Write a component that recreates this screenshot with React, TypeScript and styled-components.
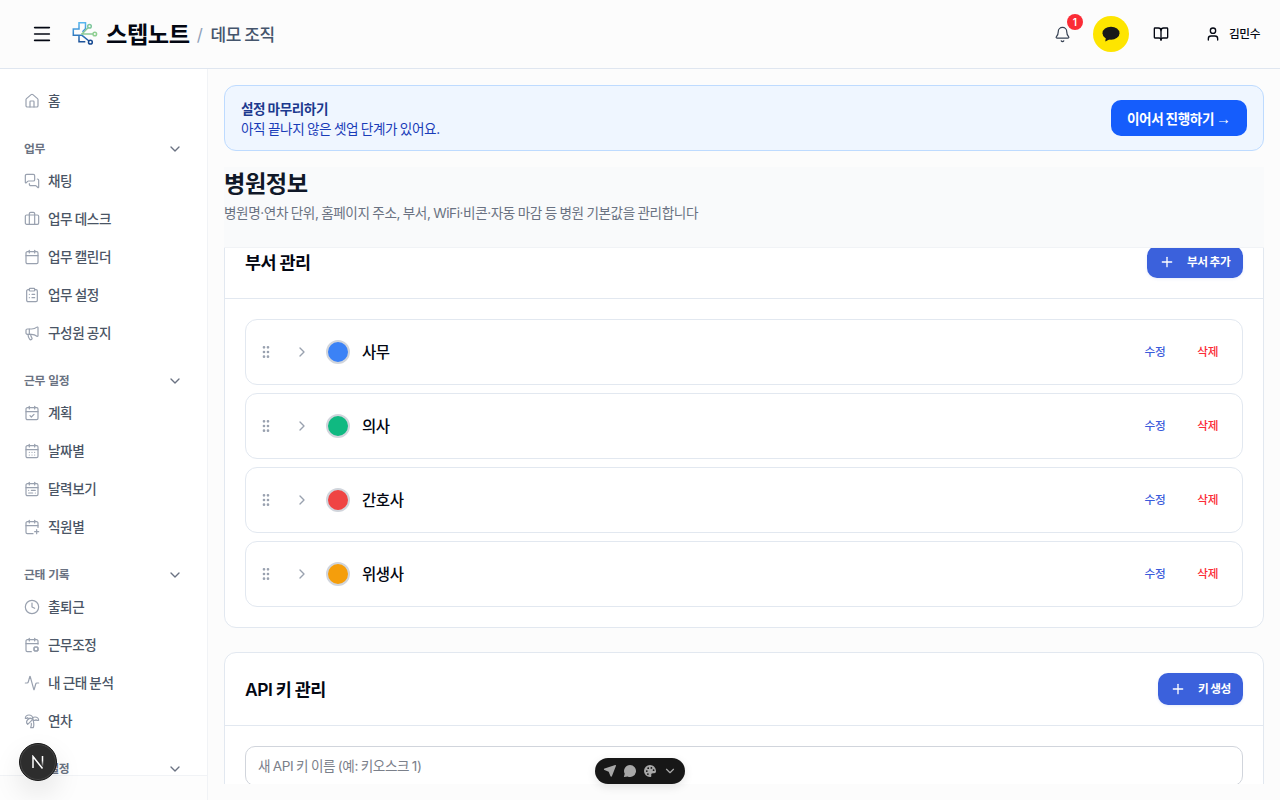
import React from "react";
import styled, { createGlobalStyle } from "styled-components";
import {
  Activity, Bell, BookOpen, Briefcase, Calendar, CalendarCheck, CalendarCog, CalendarDays,
  CalendarPlus, CalendarRange, ChevronDown, ChevronRight, ClipboardList, Clock, GripVertical,
  House, Megaphone, Menu, MessagesSquare, Plus, TreePalm, User,
} from "lucide-react";
import type { LucideIcon } from "lucide-react";

const Global = createGlobalStyle`
  *, *::before, *::after { box-sizing: border-box; }
  body {
    margin: 0;
    background: #fcfcfc;
    color: #030712;
    font-family: Inter, "Noto Sans CJK KR", sans-serif;
    font-size: 13.6px;
    line-height: 20px;
    letter-spacing: -0.03em;
    word-spacing: -0.05em;
    overflow: hidden;
  }
  button, input { font: inherit; letter-spacing: inherit; word-spacing: inherit; }
  svg { display: block; flex-shrink: 0; }
  h1, h2, p { margin: 0; }
`;

const Page = styled.div`
  display: flex;
  flex-direction: column;
  height: 100vh;
`;

const Header = styled.header`
  display: flex;
  align-items: center;
  justify-content: space-between;
  height: 69px;
  flex-shrink: 0;
  padding: 0 20px 0 31px;
  border-bottom: 1px solid #dfe6f0;
`;

const Brand = styled.div`
  display: flex;
  align-items: center;
`;

const LogoMark = styled.svg`
  margin-left: 19px;
`;

const BrandName = styled.span`
  margin-left: 8px;
  padding-top: 2px;
  font-size: 23.2px;
  line-height: 32px;
  font-weight: 700;
`;

const Slash = styled.span`
  margin-left: 7px;
  padding-top: 1px;
  font-size: 17px;
  color: #90a1b9;
`;

const OrgName = styled.span`
  margin-left: 8px;
  padding-top: 1px;
  font-size: 17px;
  line-height: 28px;
  font-weight: 500;
  color: #45556c;
`;

const Actions = styled.div`
  display: flex;
  align-items: center;
`;

const IconButton = styled.button`
  position: relative;
  display: flex;
  align-items: center;
  justify-content: center;
  width: 36px;
  height: 36px;
  padding: 0;
  border: 0;
  background: none;
  color: #030712;
`;

const KakaoButton = styled(IconButton)`
  margin: 0 14px 0 12px;
  border-radius: 50%;
  background: #fee500;
`;

const Badge = styled.span`
  position: absolute;
  top: -2px;
  right: -2px;
  width: 16px;
  height: 16px;
  border-radius: 8px;
  background: #fb2c36;
  color: #fff;
  font-size: 10px;
  line-height: 16px;
  font-weight: 600;
  letter-spacing: 0;
  text-align: center;
`;

const UserButton = styled.button`
  display: flex;
  align-items: center;
  gap: 8px;
  margin-left: 26px;
  padding: 0;
  border: 0;
  background: none;
  color: #030712;
  font-size: 11.7px;
  line-height: 16px;
  font-weight: 500;
`;

const Body = styled.div`
  display: flex;
  flex: 1;
  min-height: 0;
`;

const Sidebar = styled.aside`
  display: flex;
  flex-direction: column;
  width: 208px;
  flex-shrink: 0;
  border-right: 1px solid #f1f3f6;
  background: #fff;
`;

const Nav = styled.nav`
  flex: 1;
  min-height: 0;
  overflow: hidden;
  padding: 14px 16px 0 12px;
`;

const SidebarFoot = styled.div`
  height: 25px;
  flex-shrink: 0;
  border-top: 1px solid #f1f3f6;
  background: #fdfdfd;
`;

const NavItem = styled.a`
  display: flex;
  align-items: center;
  gap: 8px;
  height: 36px;
  margin-bottom: 2px;
  padding: 0 12px;
  color: #4a5565;
  font-weight: 500;

  svg { color: #99a1af; }
`;

const NavGroup = styled.div`
  display: flex;
  align-items: center;
  justify-content: space-between;
  height: 29px;
  margin-top: 15px;
  padding: 0 8px 0 12px;
  color: #6a7282;
  font-size: 11.8px;
  line-height: 16px;
  font-weight: 600;
  letter-spacing: -0.02em;
  word-spacing: 0.02em;
`;

const Main = styled.main`
  display: flex;
  flex-direction: column;
  flex: 1;
  min-width: 0;
  padding: 16px;
`;

const SetupBanner = styled.section`
  display: flex;
  align-items: center;
  justify-content: space-between;
  height: 66px;
  flex-shrink: 0;
  padding: 0 16px;
  border: 1px solid #bedbff;
  border-radius: 12px;
  background: #eff6ff;
  color: #193cb8;
`;

const BannerText = styled.div`
  padding-top: 2px;
`;

const BannerTitle = styled.p`
  font-weight: 600;
  color: #1c398e;
`;

const ContinueButton = styled.button`
  display: flex;
  align-items: center;
  justify-content: center;
  gap: 2px;
  width: 136px;
  height: 36px;
  padding: 1px 0 0;
  border: 0;
  border-radius: 10px;
  background: #155dfc;
  color: #fff;
  font-weight: 600;
`;

const Arrow = styled.span`
  font-family: "Liberation Sans", sans-serif;
  font-size: 15px;
  font-weight: 400;
  letter-spacing: 0;
`;

const PageHead = styled.div`
  height: 81px;
  flex-shrink: 0;
  margin-top: 16px;
  padding-top: 1px;
  border-bottom: 1px solid #f1f3f6;
  background: #f9fafb;
`;

const PageTitle = styled.h1`
  font-size: 23.2px;
  line-height: 32px;
  font-weight: 700;
  color: #101828;
`;

const PageSub = styled.p`
  margin-top: 3px;
  color: #6a7282;
`;

const Scroller = styled.div`
  flex: 1;
  min-height: 0;
  overflow: hidden;
`;

const Card = styled.section<{ $scrolled?: boolean }>`
  margin-top: ${(p) => (p.$scrolled ? "-23px" : "24px")};
  border: 1px solid #e2e8f0;
  border-radius: 12px;
  background: #fff;
`;

const CardHead = styled.div`
  display: flex;
  align-items: center;
  justify-content: space-between;
  height: 73px;
  padding: 0 20px;
  border-bottom: 1px solid #e2e8f0;
`;

const CardTitle = styled.h2`
  padding-top: 1px;
  font-size: 17.4px;
  line-height: 28px;
  font-weight: 600;
`;

const CardBody = styled.div`
  display: flex;
  flex-direction: column;
  gap: 8px;
  padding: 20px;
`;

const AddButton = styled.button<{ $width: number }>`
  display: flex;
  align-items: center;
  gap: 12px;
  width: ${(p) => p.$width}px;
  height: 32px;
  padding: 0 12px;
  border: 0;
  border-radius: 10px;
  background: #3b61dc;
  color: #fff;
  font-size: 11.7px;
  line-height: 16px;
  font-weight: 600;
  white-space: nowrap;
  box-shadow: 0 1px 3px rgba(59, 97, 220, 0.12);
`;

const DeptRow = styled.div`
  display: flex;
  align-items: center;
  height: 66px;
  padding: 0 24px 0 12px;
  border: 1px solid #e2e8f0;
  border-radius: 12px;
  color: #99a1af;
`;

const Swatch = styled.span<{ $color: string }>`
  width: 24px;
  height: 24px;
  margin: 0 12px 0 16px;
  border: 2px solid #d1d5dc;
  border-radius: 50%;
  background: ${(p) => p.$color};
`;

const DeptName = styled.span`
  flex: 1;
  padding-top: 1px;
  color: #030712;
  font-size: 15.5px;
  line-height: 24px;
  font-weight: 500;
`;

const TextAction = styled.button<{ $danger?: boolean }>`
  margin-left: ${(p) => (p.$danger ? "32px" : "0")};
  padding: 0;
  border: 0;
  background: none;
  color: ${(p) => (p.$danger ? "#fb2c36" : "#3b5bdb")};
  font-size: 11.7px;
  line-height: 16px;
  font-weight: 500;
`;

const GripIcon = styled(GripVertical)`
  margin-right: 20px;
`;

const KeyInput = styled.input`
  height: 40px;
  padding: 0 12px;
  border: 1px solid #d1d5dc;
  border-radius: 10px;
  background: #fff;
  outline: none;

  &::placeholder { color: #7b808a; opacity: 1; }
`;

const DevBadge = styled.div`
  position: fixed;
  left: 19px;
  bottom: 19px;
  display: flex;
  align-items: center;
  justify-content: center;
  width: 38px;
  height: 38px;
  border: 1px solid #171717;
  border-radius: 50%;
  background: #2d2d2d;
  box-shadow: inset 0 0 0 1px #454545, 0 12px 28px rgba(0, 0, 0, 0.1);
`;

const FloatingBar = styled.div`
  position: fixed;
  left: 595px;
  bottom: 16px;
  display: flex;
  align-items: center;
  justify-content: space-between;
  width: 90px;
  height: 26px;
  padding: 0 8px;
  border-radius: 13px;
  background: #171717;
  color: #a8a8a8;
  box-shadow: 0 3px 10px rgba(0, 0, 0, 0.1);
`;

type Entry = { label: string; icon: LucideIcon };

const groups: { title: string; items: Entry[] }[] = [
  {
    title: "업무",
    items: [
      { label: "채팅", icon: MessagesSquare },
      { label: "업무 데스크", icon: Briefcase },
      { label: "업무 캘린더", icon: Calendar },
      { label: "업무 설정", icon: ClipboardList },
      { label: "구성원 공지", icon: Megaphone },
    ],
  },
  {
    title: "근무 일정",
    items: [
      { label: "계획", icon: CalendarCheck },
      { label: "날짜별", icon: CalendarDays },
      { label: "달력보기", icon: CalendarRange },
      { label: "직원별", icon: CalendarPlus },
    ],
  },
  {
    title: "근태 기록",
    items: [
      { label: "출퇴근", icon: Clock },
      { label: "근무조정", icon: CalendarCog },
      { label: "내 근태 분석", icon: Activity },
      { label: "연차", icon: TreePalm },
    ],
  },
  { title: "병원 설정", items: [] },
];

const departments = [
  { name: "사무", color: "#3b82f6" },
  { name: "의사", color: "#10b981" },
  { name: "간호사", color: "#ef4444" },
  { name: "위생사", color: "#f59e0b" },
];

function Logo() {
  return (
    <LogoMark width="26" height="26" viewBox="0 0 26 26" fill="none" strokeWidth="1.5">
      <defs>
        <linearGradient id="cross" x1="0" y1="1" x2="0" y2="22" gradientUnits="userSpaceOnUse">
          <stop offset="0" stopColor="#58b9f0" />
          <stop offset="0.5" stopColor="#3b8bd0" />
          <stop offset="1" stopColor="#174a91" />
        </linearGradient>
      </defs>
      <path d="M13.5 8V1.7H7V8H1.3v6.3H7v6.4h6.3M7 14.3h3L17 20M13.5 7.8l-3 3" stroke="url(#cross)" />
      <path d="M9.500 13.500 16 6.800M9 13h12" stroke="#8ac996" />
      <circle cx="17.5" cy="5.2" r="1.8" stroke="#7fc79d" />
      <circle cx="22.8" cy="13" r="1.8" stroke="#8fcf91" />
      <circle cx="18.4" cy="21.2" r="1.9" stroke="#174a91" />
    </LogoMark>
  );
}

function NavLink({ label, icon: Icon }: Entry) {
  return (
    <NavItem>
      <Icon size={16} strokeWidth={1.8} />
      {label}
    </NavItem>
  );
}

export default function App() {
  return (
    <Page>
      <Global />
      <Header>
        <Brand>
          <Menu size={22} strokeWidth={1.8} />
          <Logo />
          <BrandName>스텝노트</BrandName>
          <Slash>/</Slash>
          <OrgName>데모 조직</OrgName>
        </Brand>
        <Actions>
          <IconButton>
            <Bell size={17} strokeWidth={1.7} color="#364153" />
            <Badge>1</Badge>
          </IconButton>
          <KakaoButton>
            <svg width="18" height="18" viewBox="0 0 18 18" fill="#191919">
              <ellipse cx="9" cy="8.2" rx="8.5" ry="6.5" />
              <path d="M4 12 3.300 16c0 .4.300.500.600.300L8 14Z" />
            </svg>
          </KakaoButton>
          <IconButton>
            <BookOpen size={16} strokeWidth={2} />
          </IconButton>
          <UserButton>
            <User size={16} strokeWidth={2} />
            김민수
          </UserButton>
        </Actions>
      </Header>
      <Body>
        <Sidebar>
          <Nav>
            <NavLink label="홈" icon={House} />
            {groups.map((g) => (
              <React.Fragment key={g.title}>
                <NavGroup>
                  {g.title}
                  <ChevronDown size={16} />
                </NavGroup>
                {g.items.map((i) => <NavLink key={i.label} {...i} />)}
              </React.Fragment>
            ))}
          </Nav>
          <SidebarFoot />
        </Sidebar>
        <Main>
          <SetupBanner>
            <BannerText>
              <BannerTitle>설정 마무리하기</BannerTitle>
              <p>아직 끝나지 않은 셋업 단계가 있어요.</p>
            </BannerText>
            <ContinueButton>이어서 진행하기 <Arrow>→</Arrow></ContinueButton>
          </SetupBanner>
          <PageHead>
            <PageTitle>병원정보</PageTitle>
            <PageSub>병원명·연차 단위, 홈페이지 주소, 부서, WiFi·비콘·자동 마감 등 병원 기본값을 관리합니다</PageSub>
          </PageHead>
          <Scroller>
            <Card $scrolled>
              <CardHead>
                <CardTitle>부서 관리</CardTitle>
                <AddButton $width={96}><Plus size={16} />부서 추가</AddButton>
              </CardHead>
              <CardBody>
                {departments.map((d) => (
                  <DeptRow key={d.name}>
                    <GripIcon size={16} />
                    <ChevronRight size={16} />
                    <Swatch $color={d.color} />
                    <DeptName>{d.name}</DeptName>
                    <TextAction>수정</TextAction>
                    <TextAction $danger>삭제</TextAction>
                  </DeptRow>
                ))}
              </CardBody>
            </Card>
            <Card>
              <CardHead>
                <CardTitle>API 키 관리</CardTitle>
                <AddButton $width={85}><Plus size={16} />키 생성</AddButton>
              </CardHead>
              <CardBody>
                <KeyInput placeholder="새 API 키 이름 (예: 키오스크 1)" />
              </CardBody>
            </Card>
          </Scroller>
        </Main>
      </Body>
      <DevBadge>
        <svg width="14" height="14" viewBox="0 0 14 14" fill="none" strokeWidth="1.5">
          <defs>
            <linearGradient id="fade" x1="0" y1="1" x2="0" y2="12" gradientUnits="userSpaceOnUse">
              <stop offset="0.4" stopColor="#fff" />
              <stop offset="1" stopColor="#fff" stopOpacity="0" />
            </linearGradient>
          </defs>
          <path d="M2 13V1.500L11.500 13.500" stroke="#fff" />
          <path d="M11.500 1 11.510 12" stroke="url(#fade)" />
        </svg>
      </DevBadge>
      <FloatingBar>
        <svg width="14" height="14" viewBox="0 0 14 14" fill="currentColor">
          <path d="M12.200 1.100 1.600 4.500c-.9.300-.9 1.300-.1 1.600l4.200 1.700 1.700 4.300c.3.800 1.400.8 1.600-.1l3.900-10.100c.2-.5-.2-1-.7-.8Z" />
        </svg>
        <svg width="14" height="14" viewBox="0 0 14 14" fill="currentColor">
          <path d="M7 1a6 6 0 1 1-2.400 11.500L1.400 13c-.4.100-.6-.300-.400-.6l.7-2.600A6 6 0 0 1 7 1Z" />
        </svg>
        <svg width="14" height="14" viewBox="0 0 14 14" fill="currentColor">
          <path fillRule="evenodd" d="M7 1a6 6 0 1 0 0 12c1 0 1.500-.7 1.300-1.600-.3-1.200.3-2.100 1.500-2.100h1.400c1.100 0 1.800-.8 1.800-2C13 3.800 10.300 1 7 1ZM3.800 6.200a.9.9 0 1 1 0 1.800.9.9 0 0 1 0-1.800Zm1.400-2.900a.9.9 0 1 1 0 1.800.9.9 0 0 1 0-1.800Zm3.200-.3a.9.9 0 1 1 0 1.800.9.9 0 0 1 0-1.800Zm2.200 2.300a.9.9 0 1 1 0 1.800.9.9 0 0 1 0-1.800ZM4.900 9.200a.9.900 0 1 1 0 1.800.9.900 0 0 1 0-1.800Z" />
        </svg>
        <ChevronDown size={14} strokeWidth={2} />
      </FloatingBar>
    </Page>
  );
}
